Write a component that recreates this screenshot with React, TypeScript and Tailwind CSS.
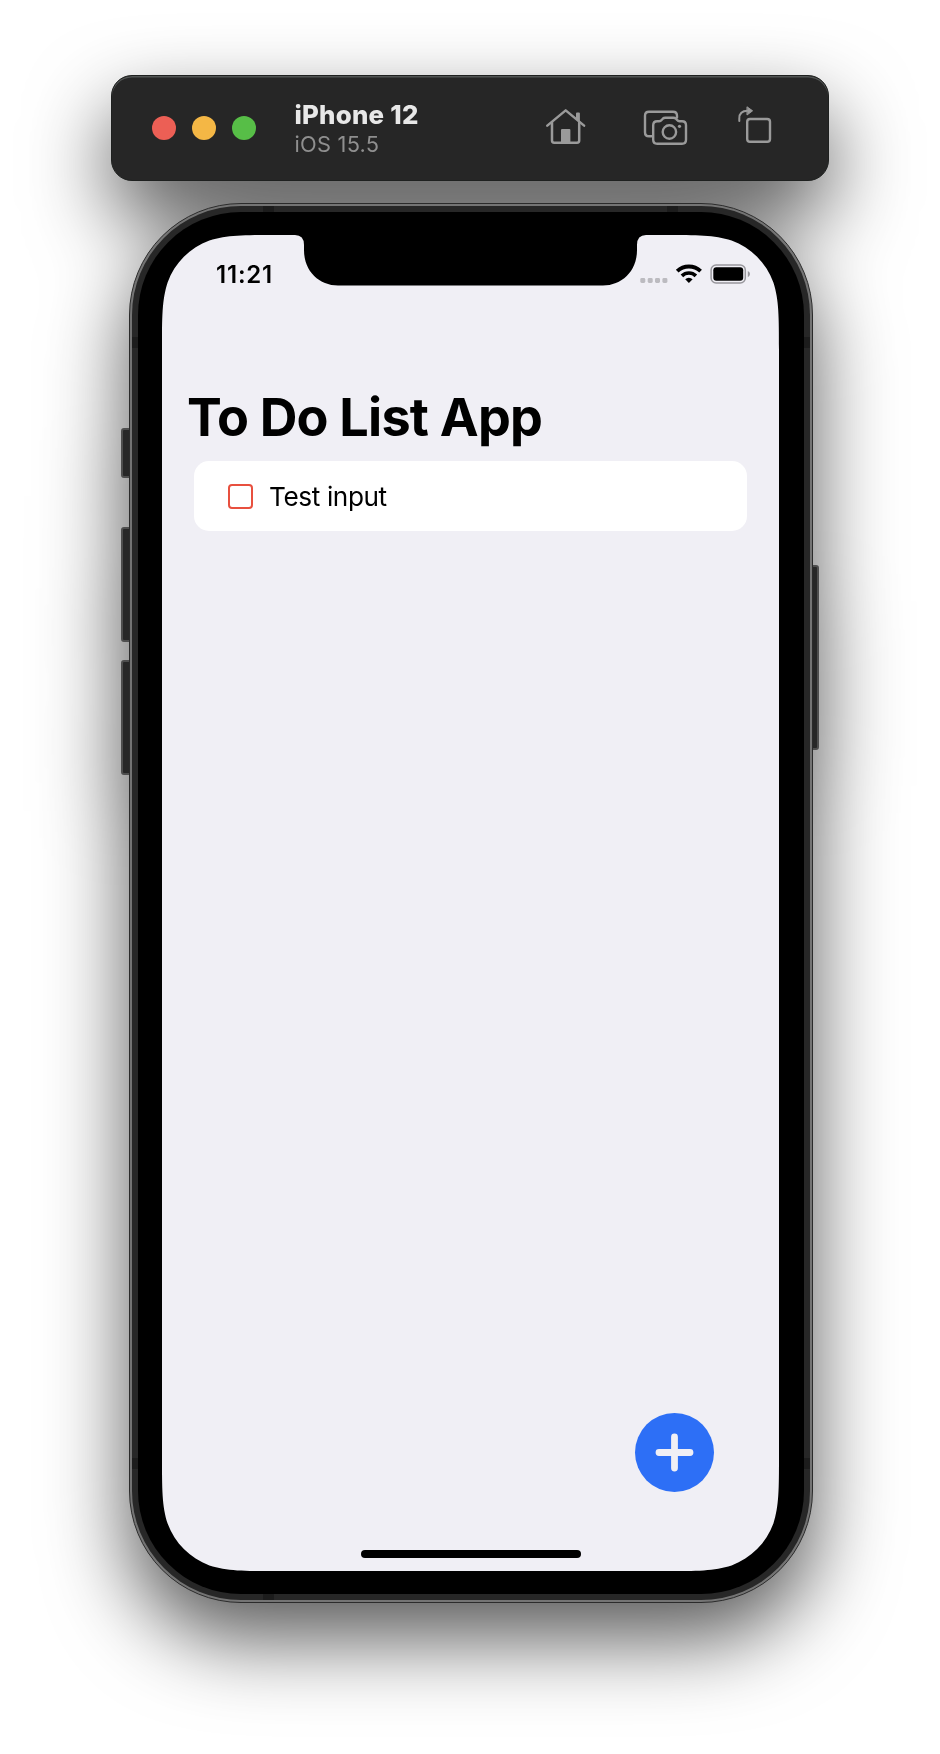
import React from "react";

function TrafficLights() {
  return (
    <div className="flex gap-4">
      <span className="size-6 rounded-full bg-[#ec5f55]" />
      <span className="size-6 rounded-full bg-[#f4b745]" />
      <span className="size-6 rounded-full bg-[#57be47]" />
    </div>
  );
}

function HomeIcon() {
  return (
    <svg className="h-[50px] w-[50px]" viewBox="541 100 50 50" fill="none" stroke="#9a9a9a" strokeWidth="2.5" strokeLinecap="round" strokeLinejoin="round">
      <path d="M547.3 124.6 565.7 109.4 584.1 124.6" />
      <path d="M552 121.5V139.6Q552 141.8 554.2 141.8H577Q579.2 141.8 579.2 139.6V121.5" />
      <path d="M577 112.6H578.9V119.5L577 118Z" strokeWidth="2" fill="#9a9a9a" />
      <path d="M562 142V129H569.4V142Z" fill="#9a9a9a" strokeWidth="2" />
    </svg>
  );
}

function ScreenshotIcon() {
  return (
    <svg className="h-[50px] w-[50px]" viewBox="641 100 50 50" fill="none" stroke="#9a9a9a" strokeWidth="2.4" strokeLinecap="round" strokeLinejoin="round">
      <path d="M651.5 135.3H649Q645 135.3 645 131.3V114.7Q645 110.7 649 110.7H673Q677 110.7 677 114.7V116.5" />
      <path d="M657.2 120.2H659.2Q660.6 120.2 661.6 119L662.8 117.7Q663.8 116.7 665.3 116.7H673.4Q674.9 116.7 675.9 117.7L677.1 119Q678.1 120.2 679.5 120.2H682Q686 120.2 686 124.2V138.7Q686 142.7 682 142.7H657.2Q653.2 142.7 653.2 138.7V124.2Q653.2 120.2 657.2 120.2Z" />
      <circle cx="669.4" cy="131" r="6.7" />
      <circle cx="679.5" cy="125.3" r="1.6" fill="#9a9a9a" stroke="none" />
    </svg>
  );
}

function RotateIcon() {
  return (
    <svg className="h-[50px] w-[50px]" viewBox="731 100 50 50" fill="none" stroke="#9a9a9a" strokeWidth="2.4" strokeLinecap="round" strokeLinejoin="round">
      <rect x="747.2" y="118" width="22.8" height="22.8" rx="2.8" />
      <path d="M739.3 120V117.5Q739.3 109.8 747.5 109.8" strokeWidth="2" />
      <path d="M747.3 106 752.6 109.8 747.3 113.8Z" fill="#9a9a9a" strokeWidth="1" />
    </svg>
  );
}

function Toolbar() {
  return (
    <header className="relative mr-[2px] flex h-[106px] w-[718px] items-center rounded-[21px] border border-[#1e201f] bg-[#262626] pl-10 shadow-[inset_0_1.5px_0_#515453]">
      <TrafficLights />
      <div className="mt-[2px] ml-[39px] flex w-[210px] flex-col whitespace-nowrap">
        <h2 className="text-[25.8px] leading-[30px] font-extrabold tracking-[0.25px] text-[#e8e8e8]">iPhone 12</h2>
        <p className="text-[21.8px] leading-[28px] tracking-[0.25px] text-[#8f8f8f]">iOS 15.5</p>
      </div>
      <div className="-mt-1 flex">
        <div className="ml-[36px]"><HomeIcon /></div>
        <div className="ml-[50px]"><ScreenshotIcon /></div>
        <div className="ml-[40px]"><RotateIcon /></div>
      </div>
    </header>
  );
}

function StatusIcons() {
  return (
    <svg className="h-[30px] w-[116px]" viewBox="638 258 116 30">
      <g fill="#bcbbc0">
        <rect x="640.3" y="278" width="5" height="5" rx="1.4" />
        <rect x="647.7" y="278" width="5" height="5" rx="1.4" />
        <rect x="655" y="278" width="5" height="5" rx="1.4" />
        <rect x="662.4" y="278" width="5" height="5" rx="1.4" />
      </g>
      <g fill="none" stroke="#000">
        <path d="M677.2 271.2A17 17 0 0 1 700.6 271.2" strokeWidth="3.9" />
        <path d="M681.9 275.9A10 10 0 0 1 695.9 275.9" strokeWidth="3.6" />
      </g>
      <path d="M688.9 283 685.2 279.2A5.3 5.3 0 0 1 692.6 279.2Z" />
      <rect x="711.1" y="265.1" width="34.2" height="17.9" rx="5" fill="none" stroke="#98979c" strokeWidth="1.5" />
      <rect x="713.3" y="267.3" width="29.9" height="13.5" rx="3" />
      <path d="M747.8 271Q750 272 750 274.1 750 276.2 747.8 277.2Z" fill="#98979c" />
    </svg>
  );
}

function Task({ label }: { label: string }) {
  return (
    <li className="flex h-[70px] items-center rounded-[15px] bg-white pl-[34px]">
      <span className="size-[25px] rounded-[4px] border-2 border-[#e8503f]" />
      <span className="mt-[2px] ml-[16px] text-[26.2px] leading-[32px] tracking-[-0.4px] text-black">{label}</span>
    </li>
  );
}

const screenShape =
  "[clip-path:path('M114.700_0H133Q142_0_142_10V15C142_37_158_50.500_176_50.500H441C459_50.500_475_37_475_15V10Q475_0_484_0H502.300C535.400_0_551.900_0_569.600_5.600C589_12.700_604.300_28_611.400_47.400C617_65.100_617_81.600_617_114.700V1221.300C617_1254.400_617_1270.900_611.400_1288.600C604.300_1308_589_1323.300_569.600_1330.400C551.900_1336_535.400_1336_502.300_1336H114.700C81.600_1336_65.100_1336_47.400_1330.400C28_1323.300_12.700_1308_5.600_1288.600C0_1270.900_0_1254.400_0_1221.300V114.700C0_81.600_0_65.100_5.600_47.400C12.700_28_28_12.700_47.400_5.600C65.100_0_81.600_0_114.700_0Z')]";

function Screen() {
  return (
    <main className={"flex h-[1336px] w-[617px] flex-col bg-[#f0eff5] " + screenShape}>
      <div className="flex h-[80px] items-start justify-between pt-[23px] pr-[25px] pl-[54px]">
        <time className="mt-[2px] text-[24px] leading-[30px] font-semibold tracking-[0.8px] text-black">11:21</time>
        <StatusIcons />
      </div>
      <h1 className="mt-[72px] ml-[25px] text-[52.2px] leading-[60px] font-bold tracking-[-0.8px] text-black">To Do List App</h1>
      <ul className="mt-[14px] mr-8 ml-8 flex-1">
        <Task label="Test input" />
      </ul>
      <button aria-label="Add task" className="mr-[65px] flex size-[79px] items-center justify-center self-end rounded-full bg-[#2d6ff6]">
        <svg className="size-[79px]" viewBox="0 0 79 79" stroke="#f0eff5" strokeWidth="6.8" strokeLinecap="round">
          <path d="M39.5 24V55M24 39.5H55" />
        </svg>
      </button>
      <div className="mt-[58px] mb-[13px] h-2 w-[220px] self-center rounded-full bg-black" />
    </main>
  );
}

function SideButton({ place }: { place: string }) {
  return <span className={"absolute border-2 border-[#4e4e4e] bg-[#272727] " + place} />;
}

function Phone() {
  return (
    <div className="relative mt-[22px] h-[1400px] w-[684px]">
      <SideButton place="top-[225px] -left-[8px] h-[50px] w-[12px] rounded-l-[3px]" />
      <SideButton place="top-[324px] -left-[8px] h-[115px] w-[12px] rounded-l-[3px]" />
      <SideButton place="top-[457px] -left-[8px] h-[115px] w-[12px] rounded-l-[3px]" />
      <SideButton place="top-[362px] -right-[6px] h-[185px] w-[10px] rounded-r-[3px]" />
      <div className="relative h-full rounded-[112px] border border-[#2b2b2b] bg-[#747474] p-[2px]">
        <div className="relative h-full overflow-hidden rounded-[109px] bg-[#272727] p-[6px]">
          <span className="absolute top-0 left-[131px] h-[6px] w-[11px] bg-[#1c1c1c]" />
          <span className="absolute top-0 left-[535px] h-[6px] w-[11px] bg-[#1c1c1c]" />
          <span className="absolute bottom-0 left-[131px] h-[6px] w-[11px] bg-[#1c1c1c]" />
          <span className="absolute top-[131px] left-0 h-[11px] w-full bg-[#1c1c1c]" />
          <span className="absolute bottom-[131px] left-0 h-[11px] w-full bg-[#1c1c1c]" />
          <div className="relative flex h-full justify-center rounded-[103px] bg-black pt-[23px]">
            <Screen />
          </div>
        </div>
      </div>
    </div>
  );
}

export default function App() {
  return (
    <div className="h-[1754px] w-[940px] overflow-hidden bg-white pt-[75px] font-['Inter','Liberation_Sans',sans-serif]">
      <div className="flex flex-col items-center pl-px [filter:drop-shadow(0_36px_41px_rgba(0,0,0,0.65))]">
        <Toolbar />
        <Phone />
      </div>
    </div>
  );
}
